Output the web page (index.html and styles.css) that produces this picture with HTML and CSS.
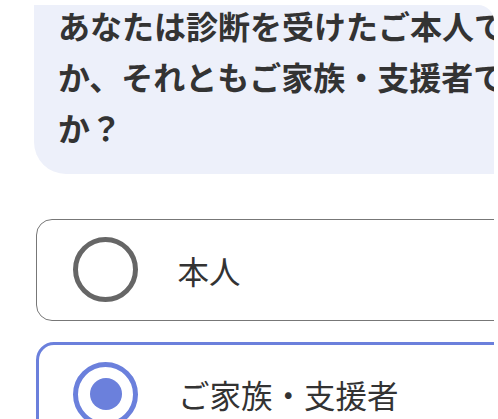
FILE: index.html
```html
<!DOCTYPE html>
<html lang="ja">
<head>
<meta charset="utf-8">
<title>質問</title>
<link rel="stylesheet" href="styles.css">
</head>
<body>
<div class="frame">
  <div class="clip">
    <div class="bubble">
      <p class="question">あなたは診断を受けたご本人ですか、それともご家族・支援者ですか？</p>
    </div>
    <div class="options">
      <div class="card">
        <span class="radio"></span>
        <span class="label">本人</span>
      </div>
      <div class="card selected">
        <span class="radio"><span class="dot"></span></span>
        <span class="label">ご家族・支援者</span>
      </div>
    </div>
  </div>
</div>
</body>
</html>
```

FILE: styles.css
```css
html, body {
  margin: 0;
  padding: 0;
  background: #ffffff;
}

.frame {
  width: 498px;
  height: 419px;
  overflow: hidden;
  background: #ffffff;
  font-family: "Noto Sans CJK JP", "Noto Sans", sans-serif;
}

.clip {
  margin: 5px 0 0 34px;
  width: 460px;
  height: 414px;
  overflow: hidden;
  border-top-right-radius: 16px;
}

.bubble {
  width: 560px;
  margin-top: -5px;
  padding: 0 0 20px 24px;
  box-sizing: border-box;
  background: #edf0fa;
  border-bottom-left-radius: 32px;
}

.question {
  margin: 0;
  width: 490px;
  font-size: 32px;
  font-weight: 700;
  line-height: 1.6;
  color: #333333;
}

.options {
  display: flex;
  flex-direction: column;
  gap: 21px;
  padding-top: 45px;
  padding-left: 2px;
}

.card {
  display: flex;
  align-items: center;
  gap: 40px;
  width: 560px;
  height: 102px;
  box-sizing: border-box;
  padding-left: 35.5px;
  border: 1.5px solid #777777;
  border-radius: 16px;
  background: #ffffff;
}

.card.selected {
  height: 105px;
  padding-left: 34px;
  border: 3px solid #6b80dc;
  border-radius: 18px;
}

.radio {
  flex-shrink: 0;
  display: flex;
  align-items: center;
  justify-content: center;
  width: 65px;
  height: 65px;
  box-sizing: border-box;
  border: 5px solid #666666;
  border-radius: 50%;
}

.selected .radio {
  border-color: #6b80dc;
}

.dot {
  width: 32px;
  height: 32px;
  border-radius: 50%;
  background: #6b80dc;
}

.label {
  font-size: 31.5px;
  font-weight: 400;
  color: #333333;
  white-space: nowrap;
}
```
